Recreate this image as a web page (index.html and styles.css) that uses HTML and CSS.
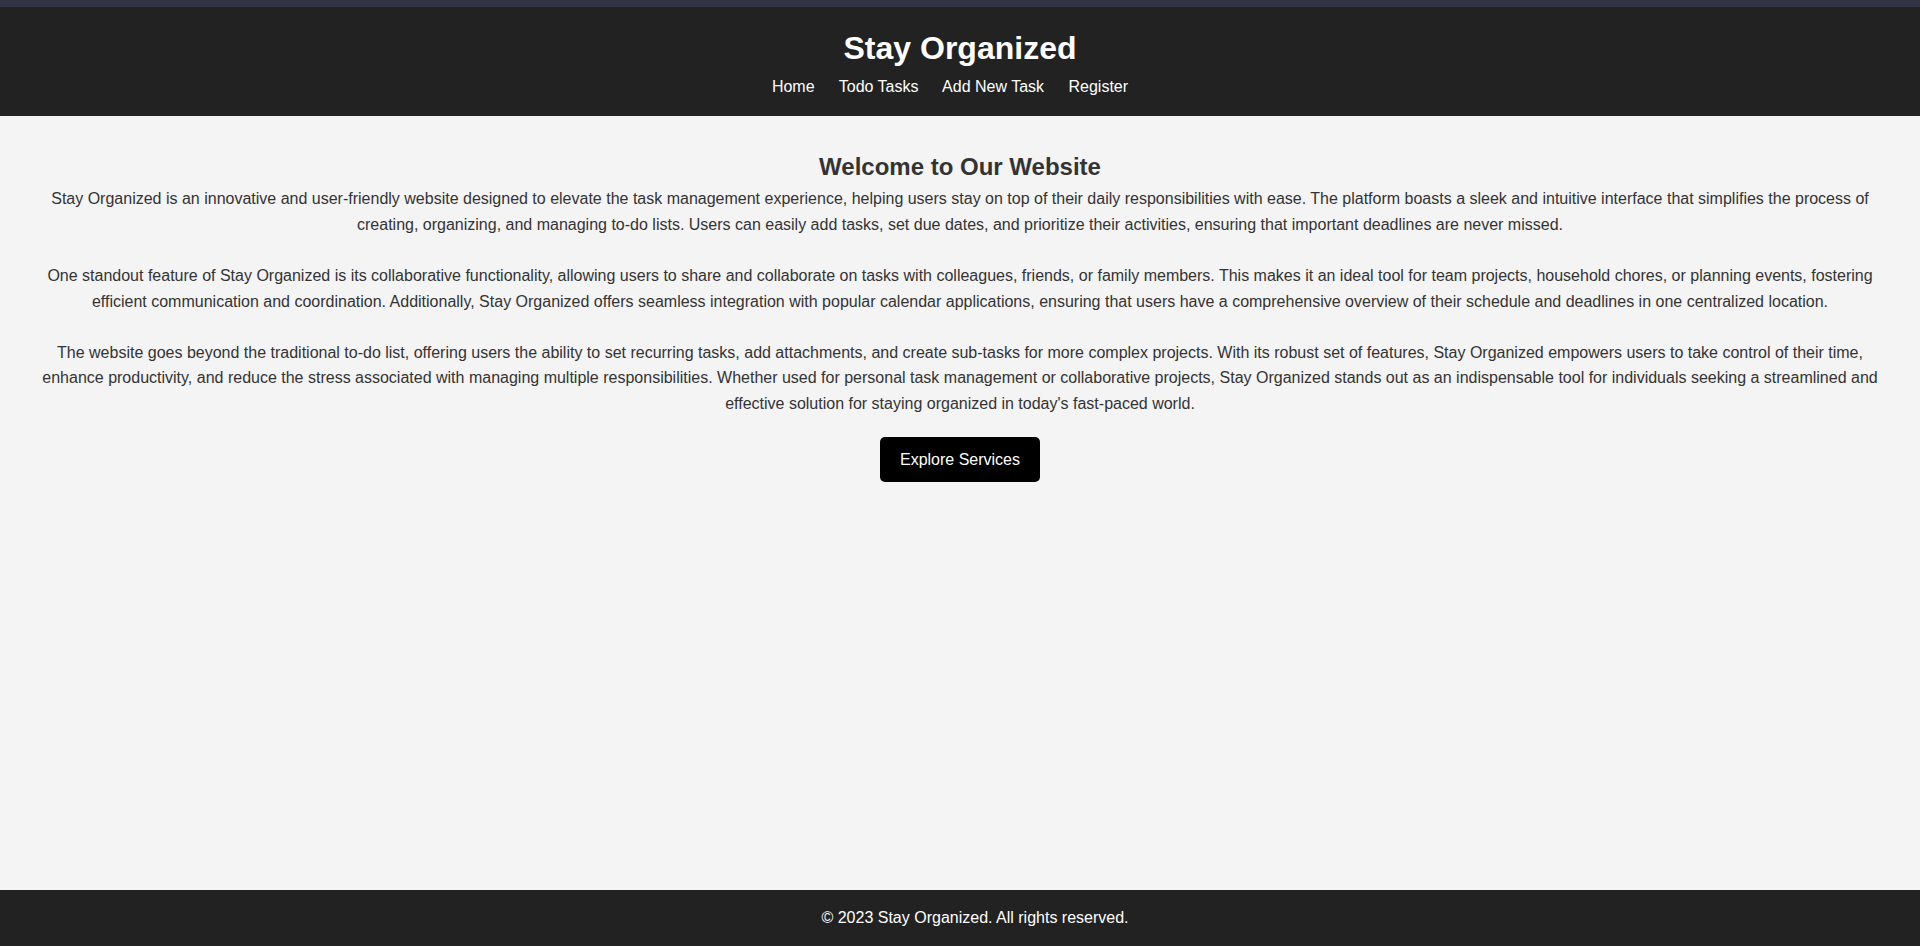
FILE: index.html
```html
<!DOCTYPE html>
<html lang="en">
<head>
<meta charset="UTF-8">
<title>Stay Organized</title>
<link rel="stylesheet" href="styles.css">
</head>
<body>
<div class="topbar"></div>
<header class="site-header">
  <h1 class="site-title">Stay Organized</h1>
  <nav class="site-nav">
    <a href="#">Home</a>
    <a href="#">Todo Tasks</a>
    <a href="#">Add New Task</a>
    <a href="#">Register</a>
  </nav>
</header>
<main class="content">
  <h2 class="welcome">Welcome to Our Website</h2>
  <p class="intro">Stay Organized is an innovative and user-friendly website designed to elevate the task management experience, helping users stay on top of their daily responsibilities with ease. The platform boasts a sleek and intuitive interface that simplifies the process of creating, organizing, and managing to-do lists. Users can easily add tasks, set due dates, and prioritize their activities, ensuring that important deadlines are never missed.</p>
  <p class="intro">One standout feature of Stay Organized is its collaborative functionality, allowing users to share and collaborate on tasks with colleagues, friends, or family members. This makes it an ideal tool for team projects, household chores, or planning events, fostering efficient communication and coordination. Additionally, Stay Organized offers seamless integration with popular calendar applications, ensuring that users have a comprehensive overview of their schedule and deadlines in one centralized location.</p>
  <p class="intro">The website goes beyond the traditional to-do list, offering users the ability to set recurring tasks, add attachments, and create sub-tasks for more complex projects. With its robust set of features, Stay Organized empowers users to take control of their time, enhance productivity, and reduce the stress associated with managing multiple responsibilities. Whether used for personal task management or collaborative projects, Stay Organized stands out as an indispensable tool for individuals seeking a streamlined and effective solution for staying organized in today's fast-paced world.</p>
  <div class="actions">
    <button class="btn" type="button">Explore Services</button>
  </div>
</main>
<footer class="site-footer">
  <p class="copyright">&copy; 2023 Stay Organized. All rights reserved.</p>
</footer>
</body>
</html>
```

FILE: styles.css
```css
html, body {
  margin: 0;
  padding: 0;
}

body {
  font-family: "Liberation Sans", Arial, sans-serif;
  font-size: 16px;
  line-height: 1.6;
  color: #333;
  background: #f4f4f4;
  min-height: 100vh;
  display: flex;
  flex-direction: column;
}

.topbar {
  height: 7px;
  background: #323345;
}

.site-header {
  background: #222;
  color: #fff;
  text-align: center;
  padding: 16px;
}

.site-title {
  margin: 0;
  font-size: 32px;
  font-weight: bold;
}

.site-nav a {
  color: #fff;
  text-decoration: none;
  margin-right: 20px;
}

.content {
  flex: 1;
  text-align: center;
  padding: 32px 32px 0;
}

.welcome {
  margin: 0;
  font-size: 24px;
  font-weight: bold;
}

.intro {
  margin: 0;
}

.intro + .intro {
  margin-top: 25.6px;
}

.actions {
  margin-top: 20px;
}

.btn {
  font: inherit;
  line-height: 1.6;
  background: #000;
  color: #fff;
  border: none;
  border-radius: 5px;
  padding: 10px 20px;
  cursor: pointer;
}

.site-footer {
  background: #222;
  color: #fff;
  text-align: center;
  padding: 15px 0 15px 30px;
}

.copyright {
  margin: 0;
}
```
